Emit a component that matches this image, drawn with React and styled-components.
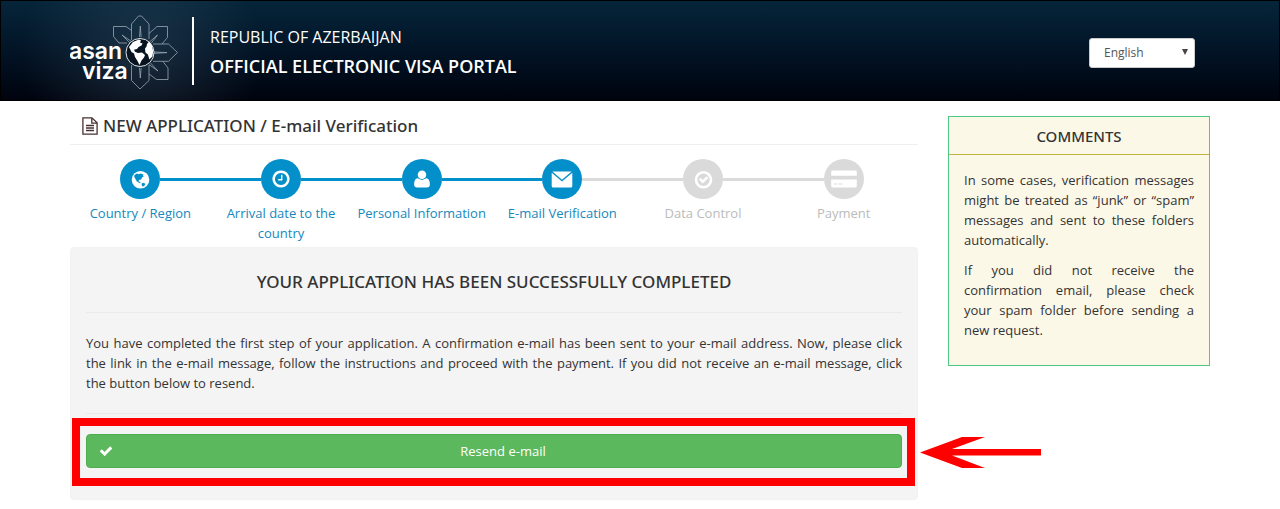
import React from "react";
import styled, { createGlobalStyle, css } from "styled-components";

const GlobalStyle = createGlobalStyle`
	* {
		box-sizing: border-box;
	}
	body {
		margin: 0;
		background: #fff;
		color: #333;
		font-family: "Open Sans", "Noto Sans", sans-serif;
		font-size: 13px;
		line-height: 20px;
	}
`;

const headingFont = css`
	font-family: "Noto Sans", "Open Sans", sans-serif;
	font-weight: 500;
`;

const Container = styled.div`
	max-width: 1170px;
	margin: 0 auto;
	padding: 0 15px;
`;

const Header = styled.header`
	border: 1px solid #000;
	background:
		radial-gradient(circle at 140px 52px, rgba(60, 85, 105, 0.4), transparent 120px),
		linear-gradient(#06253a, #021426 50%, #00030e);
`;
const HeaderRow = styled(Container)`
	display: flex;
	align-items: center;
	padding-top: 10px;
	padding-bottom: 10px;
`;
const Logo = styled.svg`
	display: block;
	width: 108px;
	height: 75px;
	margin-top: 4px;
	flex: none;
`;
const Brand = styled.div`
	margin-left: 14px;
	padding: 6px 0 4px 16px;
	border-left: 2px solid #fff;
	color: #fff;
`;
const Country = styled.p`
	margin: 0;
	font-size: 16px;
	line-height: 28px;
`;
const Portal = styled.h1`
	margin: 0;
	font-size: 18px;
	font-weight: 600;
	line-height: 30px;
`;

const SelectBox = styled.div`
	position: relative;
	width: 106px;
	margin: 4px 15px 0 auto;
`;
const Select = styled.select`
	display: block;
	appearance: none;
	width: 100%;
	height: 30px;
	padding: 0 14px;
	border: 1px solid #ccc;
	border-radius: 3px;
	background: #fff;
	color: #555;
	font-family: inherit;
	font-size: 12px;
`;
const SelectArrow = styled.svg`
	position: absolute;
	top: 11px;
	right: 7px;
	width: 6px;
	height: 6px;
	fill: #444;
	pointer-events: none;
`;

const Page = styled(Container)`
	display: grid;
	grid-template-columns: minmax(0, 1fr) 262px;
	align-items: start;
	gap: 30px;
	padding-top: 15px;
`;

const PageTitle = styled.h2`
	display: flex;
	align-items: center;
	gap: 5px;
	margin: 0;
	padding: 0 12px 8px;
	border-bottom: 1px solid #eee;
	${headingFont}
	font-size: 17px;
	line-height: 20px;
`;
const FileIcon = styled.svg`
	width: 16px;
	height: 18px;
	flex: none;
`;

const Steps = styled.ol`
	display: grid;
	grid-template-columns: repeat(6, 1fr);
	margin: 0;
	padding: 14px 4px 4px 0;
	list-style: none;
`;
const Track = styled.div`
	display: flex;
	align-items: center;

	&::before,
	&::after {
		content: "";
		flex: 1;
		height: 3px;
	}
	&::before {
		background: ${({ $before }) => $before};
	}
	&::after {
		background: ${({ $after }) => $after};
	}
`;
const Circle = styled.span`
	display: grid;
	place-items: center;
	width: 40px;
	height: 40px;
	border-radius: 50%;
	background: ${({ $color }) => $color};
	color: #fff;
`;
const StepLabel = styled.div`
	padding: 4px 5px 0;
	color: #bbb;
	text-align: center;
	${({ $done }) =>
		$done &&
		css`
			color: #1588bd;
		`}
`;
const StepIcon = styled.svg`
	width: ${({ $size }) => $size || 20}px;
	height: ${({ $size }) => $size || 20}px;
	fill: currentColor;
`;

const Well = styled.section`
	padding: 24px 15px 31px;
	border: 1px solid #f2f2f2;
	border-radius: 4px;
	background: #f4f4f4;
`;
const WellTitle = styled.h3`
	margin: 0;
	${headingFont}
	font-size: 17px;
	line-height: 20px;
	text-align: center;
`;
const Rule = styled.hr`
	margin: 20px 0;
	border: 0;
	border-top: 1px solid #eaeaea;
`;
const Text = styled.p`
	margin: 0 0 10px;
	text-align: justify;
`;

const Highlight = styled.div`
	position: relative;

	&::before {
		content: "";
		position: absolute;
		inset: -16px -13px -18px -14px;
		border: 8px solid #f00;
		pointer-events: none;
	}
`;
const Arrow = styled.svg`
	position: absolute;
	top: 2px;
	left: calc(100% + 18px);
	width: 122px;
	height: 33px;
	fill: #f00;
`;
const ResendButton = styled.button`
	display: grid;
	grid-template-columns: 14px 1fr;
	align-items: center;
	gap: 4px;
	width: 100%;
	height: 34px;
	padding: 0 12px;
	border: 1px solid #4cae4c;
	border-radius: 4px;
	background: #5cb85c;
	color: #fff;
	font-family: inherit;
	font-size: 13px;
	cursor: pointer;
`;

const Comments = styled.aside`
	border: 1px solid #4fc884;
	background: #fcf8e8;
`;
const CommentsTitle = styled.h3`
	margin: 0;
	padding: 9px 9px 8px;
	border-bottom: 1px solid #c2b53f;
	${headingFont}
	font-size: 15px;
	line-height: 20px;
	text-align: center;
`;
const CommentsBody = styled.div`
	padding: 15px;
`;

const BLUE = "#0390ca";
const GREY = "#dadada";

const steps = [
	{ label: "Country / Region", icon: "globe", done: true },
	{ label: "Arrival date to the country", icon: "clock", done: true },
	{ label: "Personal Information", icon: "user", done: true },
	{ label: "E-mail Verification", icon: "mail", done: true },
	{ label: "Data Control", icon: "check" },
	{ label: "Payment", icon: "card" },
];

const CHECK =
	"M1671 566q0 40-28 68l-724 724-136 136q-28 28-68 28t-68-28l-136-136-362-362q-28-28-28-68t28-68l136-136q28-28 68-28t68 28l294 295 656-657q28-28 68-28t68 28l136 136q28 28 28 68z";

function Icon({ name }) {
	switch (name) {
		case "globe":
			return (
				<StepIcon viewBox='0 0 20 20'>
					<circle cx='10.5' cy='10.800' r='8.8' />
					<path
						fill={BLUE}
						d='M4.500 6 7 4.500l1.600.8 1.800-.9 3.200 1-.9 1 1.300.6-1.900 1.400-1 2-2.200.6-.3 1.500 1.500.4.700 1.200-1.300-.1-2.600-1.600L5 9.300l-.8-1.500z'
					/>
					<path fill={BLUE} d='m11.600 14.500 1.800-.8 2 1-.8 1.700-1.900 1.400-1-1.700z' />
				</StepIcon>
			);
		case "clock":
			return (
				<StepIcon viewBox='0 0 1792 1792'>
					<path d='M1024 544v448q0 14-9 23t-23 9h-320q-14 0-23-9t-9-23v-64q0-14 9-23t23-9h224v-352q0-14 9-23t23-9h64q14 0 23 9t9 23zm416 352q0-148-73-273t-198-198-273-73-273 73-198 198-73 273 73 273 198 198 273 73 273-73 198-198 73-273zm224 0q0 209-103 385.5t-279.5 279.5-385.5 103-385.5-103-279.5-279.5-103-385.5 103-385.5 279.5-279.5 385.5-103 385.5 103 279.5 279.5 103 385.5z' />
				</StepIcon>
			);
		case "user":
			return (
				<StepIcon viewBox='0 0 1792 1792'>
					<path d='M1600 1405q0 120-73 189.5t-194 69.5h-874q-121 0-194-69.5t-73-189.5q0-53 3.5-103.5t14-109 26.5-108.5 43-97.5 62-81 85.5-53.5 111.5-20q9 0 42 21.5t74.5 48 108 48 133.5 21.5 133.5-21.5 108-48 74.5-48 42-21.5q61 0 111.5 20t85.5 53.5 62 81 43 97.5 26.5 108.5 14 109 3.5 103.5zm-320-893q0 159-112.5 271.5t-271.5 112.5-271.5-112.5-112.5-271.5 112.5-271.5 271.5-112.5 271.5 112.5 112.5 271.5z' />
				</StepIcon>
			);
		case "mail":
			return (
				<StepIcon $size={22} viewBox='0 0 22 22'>
					<path d='M1.400 3.500h19.200L11 11.800z' />
					<path d='M.7 4.800 11 13.400l10.300-8.600V18q0 1.500-1.500 1.500H2.200Q.7 19.500.7 18z' />
				</StepIcon>
			);
		case "check":
			return (
				<StepIcon viewBox='0 0 20 20'>
					<circle cx='10.500' cy='10.800' r='7.5' fill='none' stroke='#fff' strokeWidth='2.6' />
					<path d='m5.800 10.600 1.800-1.800 2.200 2.200 3.800-3.800 1.800 1.800-5.600 5.600z' />
				</StepIcon>
			);
		default:
			return (
				<StepIcon $size={26} viewBox='0 0 26 26'>
					<path d='M1.500 4.500h23q1.300 0 1.300 1.300V9.700H.2V5.800q0-1.300 1.300-1.300zM.2 13.500h25.600v6.800q0 1.300-1.300 1.300h-23q-1.300 0-1.300-1.300z' />
					<path stroke={GREY} d='M3 18h3M7.500 18h4' />
				</StepIcon>
			);
	}
}

function AsanLogo() {
	return (
		<Logo viewBox='20 15 108 75' role='img' aria-label='asan viza'>
			<g fill='none' stroke='#9aa6b1' strokeWidth='0.8'>
				<path d='M81.500 40V24L88.500 16h3L99 24v15' />
				<path d='M77 43h-8l-5.500-6.500V26.500H76l5.500 4' />
				<path d='M99 33.500l8-7h10.500v11l-5.500 6.500' />
				<path d='M103 44h15.500l9 8.500-9 8.800H103' />
				<path d='M113 61.500l5 6.500v11.500h-11.500L99 74' />
				<path d='M81.500 65v15.500l8.500 8.500 9-8.500V65' />
				<path d='m89.500 37 .8-11 .8 11M80 43l-8-8 9.500 6.500M99.500 42l8-7-6.500 8.500M104 52l13 .6-13 .8M100.500 63l7.500 8-9-6.500M89.500 68l.8 10 .8-10' />
			</g>
			<circle cx='90' cy='52.5' r='14' fill='#07131e' stroke='#dfe5e9' />
			<path
				fill='#fff'
				d='M79 47l4-5 6-2.500 2 1-1 2 2.500 1-1 2-3 1.500-1.500 2-3 .8 1 2 3 1.200 4-.5 3 2.500-1 2.500-2.500 3-2 4.500-2-4-2.500-4-1-3.500-2.500-1.500zM97 44l2-2.500 3 4 1.200 6-.8 5-3 3-1.500-5-2.500-2-.4-4 1.500-2z'
			/>
			<g fill='#fff' fontFamily='Inter, sans-serif' fontWeight='600' fontSize='23'>
				<text x='19' y='59'>asan</text>
				<text x='32' y='79'>viza</text>
			</g>
		</Logo>
	);
}

export default function App() {
	return (
		<>
			<GlobalStyle />
			<Header>
				<HeaderRow>
					<AsanLogo />
					<Brand>
						<Country>REPUBLIC OF AZERBAIJAN</Country>
						<Portal>OFFICIAL ELECTRONIC VISA PORTAL</Portal>
					</Brand>
					<SelectBox>
						<Select aria-label='Language' defaultValue='en'>
							<option value='en'>English</option>
						</Select>
						<SelectArrow viewBox='0 0 6 6'>
							<path d='M0 0h6L3 6z' />
						</SelectArrow>
					</SelectBox>
				</HeaderRow>
			</Header>

			<Page>
				<main>
					<PageTitle>
						<FileIcon viewBox='0 0 16 18' fill='none' stroke='#4a3030' strokeWidth='1.3'>
							<path d='M.9.9h9l5.200 5v11.200H.9zM9.800.9v5.200h5.300' />
							<path d='M4 8.500h8M4 11h8M4 13.500h8' />
						</FileIcon>
						NEW APPLICATION / E-mail Verification
					</PageTitle>

					<Steps>
						{steps.map((step, i) => {
							const color = step.done ? BLUE : GREY;
							const next = steps[i + 1];
							return (
								<li key={step.label}>
									<Track
										$before={i === 0 ? "transparent" : color}
										$after={!next ? "transparent" : next.done ? BLUE : GREY}
									>
										<Circle $color={color}>
											<Icon name={step.icon} />
										</Circle>
									</Track>
									<StepLabel $done={step.done}>{step.label}</StepLabel>
								</li>
							);
						})}
					</Steps>

					<Well>
						<WellTitle>YOUR APPLICATION HAS BEEN SUCCESSFULLY COMPLETED</WellTitle>
						<Rule />
						<Text>
							You have completed the first step of your application. A confirmation
							e-mail has been sent to your e-mail address. Now, please click the link
							in the e-mail message, follow the instructions and proceed with the
							payment. If you did not receive an e-mail message, click the button
							below to resend.
						</Text>
						<Rule />
						<Highlight>
							<ResendButton type='button'>
								<StepIcon $size={14} viewBox='0 0 1792 1792'>
									<path d={CHECK} />
								</StepIcon>
								Resend e-mail
							</ResendButton>
							<Arrow viewBox='0 0 122 33'>
								<path d='M0 16.500 42 1h23L32 13h89v6.500H32L65 32H42z' />
							</Arrow>
						</Highlight>
					</Well>
				</main>

				<Comments>
					<CommentsTitle>COMMENTS</CommentsTitle>
					<CommentsBody>
						<Text>
							In some cases, verification messages might be treated as “junk” or
							“spam” messages and sent to these folders automatically.
						</Text>
						<Text>
							If you did not receive the confirmation email, please check
							your&nbsp;spam folder before sending a new request.
						</Text>
					</CommentsBody>
				</Comments>
			</Page>
		</>
	);
}
